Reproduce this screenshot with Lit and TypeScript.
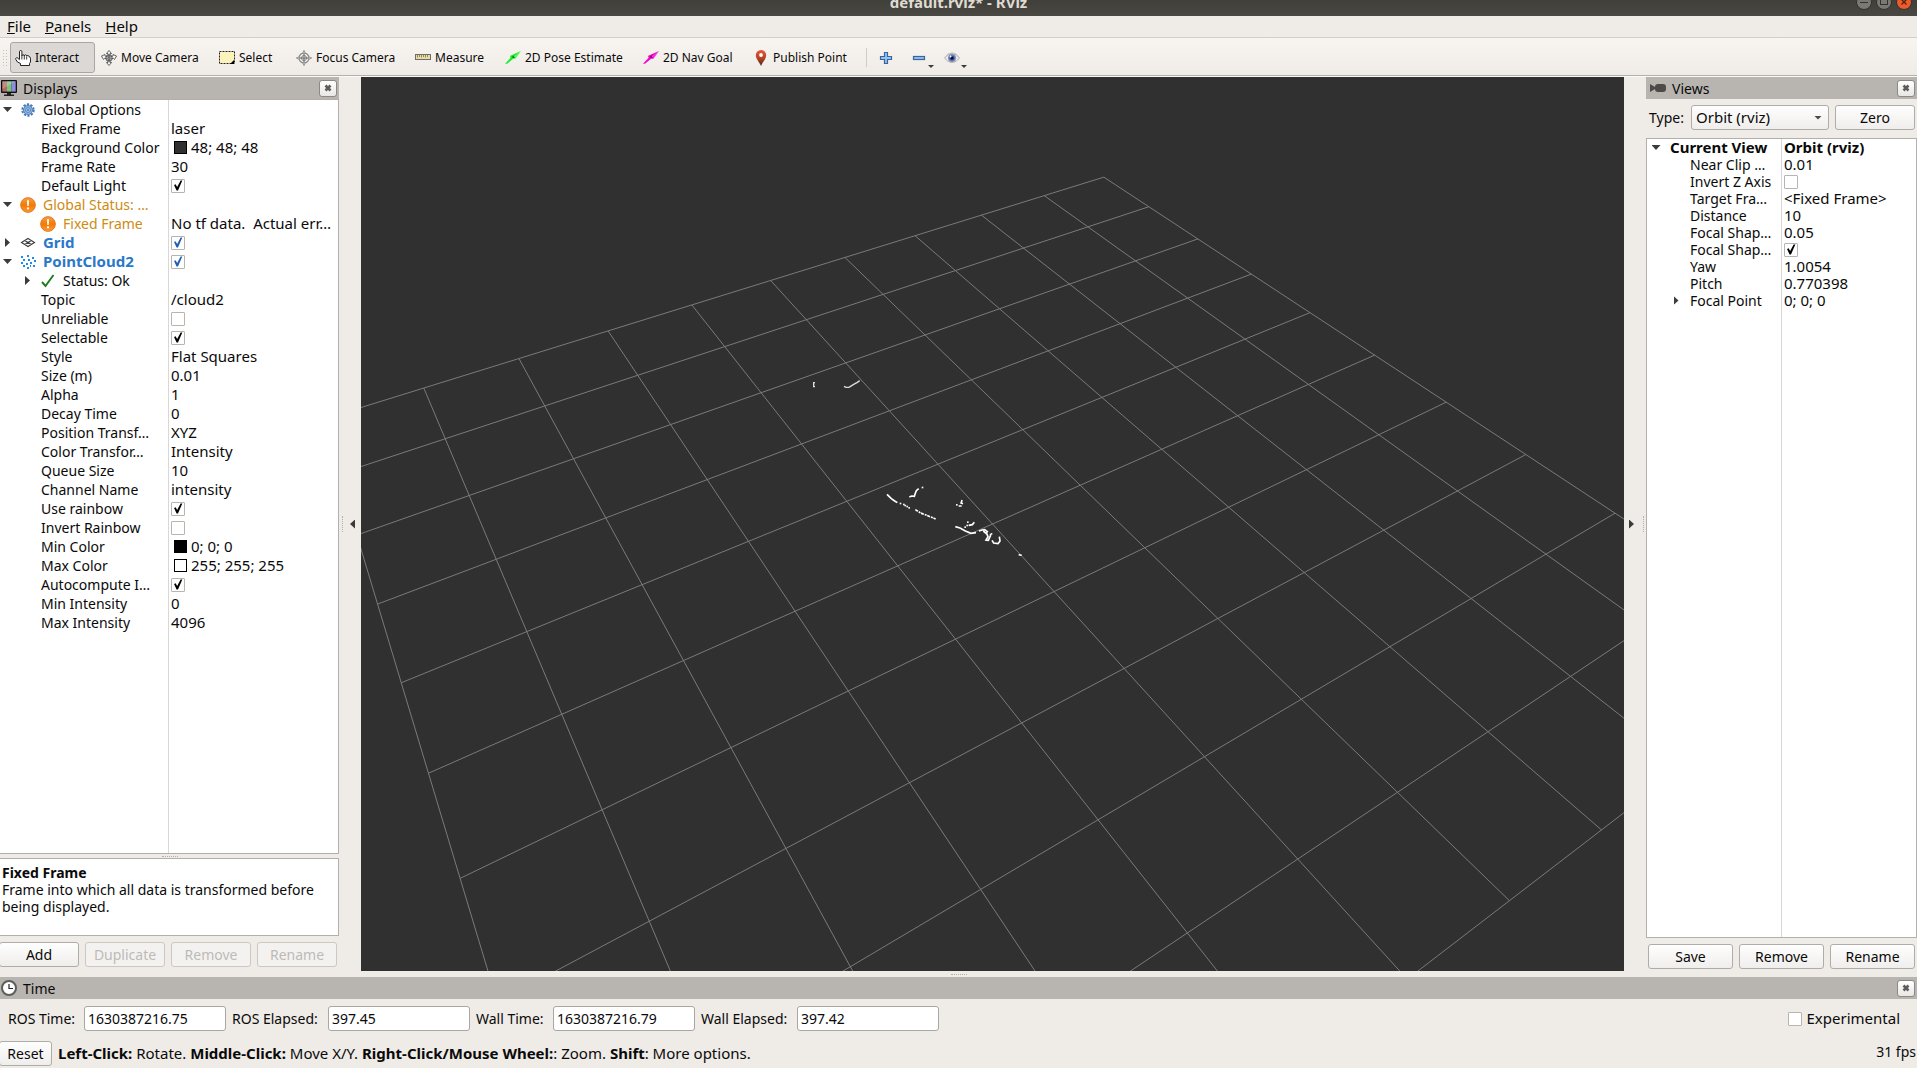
import { LitElement, html, svg, css, nothing, TemplateResult } from "lit";
import { customElement, property } from "lit/decorators.js";
import { classMap } from "lit/directives/class-map.js";
import { styleMap } from "lit/directives/style-map.js";

/* ---------- icons ---------- */

const icon = (body: TemplateResult, w = 16, h = 16) => html`<svg
  width=${w} height=${h} viewBox="0 0 ${w} ${h}" aria-hidden="true" style="display:block;flex:none">${body}</svg>`;

const icons: Record<string, () => TemplateResult> = {
  hand: () => icon(svg`
    <path d="M4.500 9.500V1.700a1.200 1.200 0 0 1 2.400 0V6a1.200 1.200 0 0 1 2.400 0a1.200 1.200 0 0 1 2.400 .2a1.200 1.200 0 0 1 2.300 .5q1.500 0 1.500 1.600V12l-1 1.500v2H5.500v-2L2.500 12L.9 9.600Q.2 8.200 1.300 7.800T3 8.400L4.500 9.700" fill="#fff" stroke="#222" stroke-width="1"/>
    <path d="M6.900 6V9.500M9.300 6V9.500M11.700 6.500V9.500" stroke="#222" stroke-width=".9" fill="none"/>`),
  move: () => icon(svg`
    <g fill="#f6f6f6" stroke="#444" stroke-width=".8">
      <path d="M8 .5L10.500 3.500H9V6H7V3.500H5.500Z"/><path d="M8 15.500L10.500 12.500H9V10H7V12.500H5.500Z"/>
      <path d="M.5 6L4 4.500V6Q8 8.500 12 6V4.500L15.500 6L13.500 9.500L12.500 8.300Q8 10.500 3.500 8.300L2.500 9.500Z"/>
      <circle cx="8" cy="8" r="3.300" fill="none"/>
    </g><path d="M8 5V11M5 8H11" stroke="#555" stroke-width=".8"/>`),
  select: () => icon(svg`
    <rect x=".5" y="1.500" width="15" height="12" fill="#fbf3bb" stroke="#222" stroke-width="1" stroke-dasharray="2 1"/>
    <path d="M15 10V14H11Z" fill="#000"/>`),
  focus: () => icon(svg`
    <g fill="none" stroke="#888" stroke-width="1">
      <circle cx="8" cy="8" r="5" stroke="#8e8e8e" stroke-width="1.300"/><circle cx="8" cy="8" r="2.500"/>
      <path d="M8 4V12M4 8H12" stroke="#666"/>
      <path d="M8 .3L9.300 3.600H6.700ZM8 15.700L9.300 12.400H6.700ZM.3 8L3.600 6.700V9.300ZM15.700 8L12.400 6.700V9.300Z" fill="#ddd" stroke="#888" stroke-width=".8"/>
    </g>`),
  measure: () => icon(svg`
    <rect x=".5" y="4.500" width="15" height="5" fill="#e9dca4" stroke="#6d6d6d"/>
    <path d="M2.500 5V7.500M4.500 5V7M6.500 5V7.500M8.500 5V7M10.500 5V7.500M12.500 5V7" stroke="#8a8153" stroke-width=".9"/>`),
  pose: () => icon(svg`
    <path d="M16 1L4.800 6L7 8.500Z" fill="#1fe81f"/><path d="M16 1L7 8.500L10.200 9Z" fill="#3dff5a"/>
    <path d="M5 8L8.500 5.800L10 8Z" fill="#0f7a1a"/><path d="M0 13.800L6.500 6.800L8.500 8.600L2 13.800Z" fill="#17ee2c"/>`),
  nav: () => icon(svg`
    <path d="M16 1L4.800 6L7 8.500Z" fill="#e800c0"/><path d="M16 1L7 8.500L10.200 9Z" fill="#ff1fe0"/>
    <path d="M5 8L8.500 5.800L10 8Z" fill="#86107a"/><path d="M0 13.800L6.500 6.800L8.500 8.600L2 13.800Z" fill="#f506d4"/>`),
  pin: () => icon(svg`
    <defs><linearGradient id="pin" x1="0" y1="0" x2="0" y2="1"><stop offset="0" stop-color="#e8553a"/><stop offset=".5" stop-color="#b84326"/><stop offset="1" stop-color="#4a2a10"/></linearGradient></defs>
    <path d="M8 0A5.200 5.200 0 0 1 13.200 5.200C13.200 9 9.500 12 8 16C6.500 12 2.800 9 2.800 5.200A5.200 5.200 0 0 1 8 0Z" fill="url(#pin)"/>
    <circle cx="8" cy="5" r="1.900" fill="#fff"/>`),
  plus: () => icon(svg`
    <path d="M6.500 2.500H9.500V6.500H13.500V9.500H9.500V13.500H6.500V9.500H2.500V6.500H6.500Z" fill="#9cc0e8" stroke="#3465a4" stroke-width="1.200"/>`),
  minus: () => icon(svg`
    <rect x="2.500" y="6.500" width="11" height="3" fill="#9cc0e8" stroke="#3465a4" stroke-width="1.200"/>`),
  eye: () => icon(svg`
    <path d="M.5 8Q3.500 3.500 8 3.500T15.500 8Q12.500 12.500 8 12.500T.5 8Z" fill="#e9e9ea" stroke="#a9a9a9" stroke-width=".9"/>
    <circle cx="8" cy="8" r="4" fill="#7c8fc4"/><circle cx="8" cy="8" r="2.600" fill="#46558f"/>
    <circle cx="8" cy="8" r="1.500" fill="#0b0d1a"/><circle cx="6.600" cy="6.500" r=".9" fill="#fff"/>
    <path d="M1 7Q4 2.800 8 2.800T15 7" fill="none" stroke="#c4c4c4" stroke-width="1"/>`),
  monitor: () => icon(svg`
    <rect x="0" y="0" width="16" height="13" rx="1" fill="#111"/>
    <rect x="1.300" y="1.300" width="4.700" height="10.300" fill="#b36a68"/><rect x="6" y="1.300" width="4.500" height="10.300" fill="#78c479"/>
    <rect x="10.500" y="1.300" width="4.200" height="10.300" fill="#8f8fe0"/>
    <path d="M1.300 1.300H14.700L1.300 9Z" fill="#fff" opacity=".22"/>
    <path d="M6 13H10V14.500H13V16H3V14.500H6Z" fill="#222"/>`),
  camera: () => icon(svg`
    <rect x="5" y="4" width="11" height="8" rx="3" fill="#4c4b49"/><path d="M0 4L5 7V9L0 12Z" fill="#4c4b49"/>`),
  clock: () => icon(svg`
    <circle cx="8" cy="8" r="7" fill="#fff" stroke="#5d5d5b" stroke-width="2"/>
    <path d="M8 4V8.500H12" fill="none" stroke="#222" stroke-width="1.200"/>`),
  gear: () => icon(svg`
    <circle cx="8" cy="8" r="5.700" fill="none" stroke="#4478b8" stroke-width="2" stroke-dasharray="2.200 1.381"/>
    <circle cx="8" cy="8" r="4.500" fill="#8fb4e0" stroke="#4478b8" stroke-width=".9"/>
    <circle cx="8" cy="8" r="2.400" fill="#b5cfee" stroke="#4a7cba" stroke-width=".9"/><circle cx="8" cy="8" r=".9" fill="#3a6cab"/>`),
  warn: () => icon(svg`
    <defs><linearGradient id="wg" x1="0" y1="0" x2="0" y2="1"><stop offset="0" stop-color="#f7a04c"/><stop offset=".5" stop-color="#f57900"/><stop offset="1" stop-color="#fb9a3a"/></linearGradient></defs>
    <circle cx="8" cy="8" r="7.400" fill="url(#wg)" stroke="#d9701a" stroke-width=".8"/>
    <path d="M7 3.200H9L8.700 9H7.300Z" fill="#fff"/><rect x="7" y="10.300" width="2" height="2" rx=".6" fill="#fff"/>`),
  grid: () => icon(svg`
    <path d="M8 3.500L14.500 7.500L8 11.500L1.500 7.500ZM4.700 5.500L11.300 9.500M11.300 5.500L4.700 9.500" fill="none" stroke="#3c3c3c" stroke-width="1.100"/>`),
  cloud: () => icon(svg`
    <g fill="#1e8af0"><rect x="1" y="2" width="2" height="2"/><rect x="7" y="1" width="2" height="2"/><rect x="12" y="3" width="2" height="2"/>
    <rect x="3" y="5" width="2" height="2"/><rect x="8" y="5" width="2" height="2"/><rect x="10" y="8" width="2" height="2"/><rect x="14" y="6" width="2" height="2"/>
    <rect x="1" y="8" width="2" height="2"/><rect x="6" y="9" width="2" height="2"/><rect x="3" y="11" width="2" height="2"/><rect x="13" y="11" width="2" height="2"/>
    <rect x="7" y="13" width="2" height="2"/><rect x="10" y="11" width="1" height="2"/></g>`),
  ok: () => icon(svg`
    <path d="M2 9L5.500 13L13.500 2" fill="none" stroke="#1f7a1f" stroke-width="1.900"/>`),
  close: () => icon(svg`
    <path d="M1.500 1.500L6.500 6.500M6.500 1.500L1.500 6.500" stroke="#5e5c5a" stroke-width="2.600"/>`, 8, 8),
};

/* ---------- property tree ---------- */

interface Row {
  level: number;
  name: string;
  icon?: string;
  arrow?: "open" | "shut";
  tone?: "warn" | "display" | "bold";
  value?: string;
  color?: string;
  check?: boolean;
}

const displayRows: Row[] = [
  { level: 0, name: "Global Options", icon: "gear", arrow: "open" },
  { level: 1, name: "Fixed Frame", value: "laser" },
  { level: 1, name: "Background Color", value: "48; 48; 48", color: "rgb(48,48,48)" },
  { level: 1, name: "Frame Rate", value: "30" },
  { level: 1, name: "Default Light", check: true },
  { level: 0, name: "Global Status: …", icon: "warn", arrow: "open", tone: "warn" },
  { level: 1, name: "Fixed Frame", icon: "warn", tone: "warn", value: "No tf data.  Actual err…" },
  { level: 0, name: "Grid", icon: "grid", arrow: "shut", tone: "display", check: true },
  { level: 0, name: "PointCloud2", icon: "cloud", arrow: "open", tone: "display", check: true },
  { level: 1, name: "Status: Ok", icon: "ok", arrow: "shut" },
  { level: 1, name: "Topic", value: "/cloud2" },
  { level: 1, name: "Unreliable", check: false },
  { level: 1, name: "Selectable", check: true },
  { level: 1, name: "Style", value: "Flat Squares" },
  { level: 1, name: "Size (m)", value: "0.01" },
  { level: 1, name: "Alpha", value: "1" },
  { level: 1, name: "Decay Time", value: "0" },
  { level: 1, name: "Position Transf…", value: "XYZ" },
  { level: 1, name: "Color Transfor…", value: "Intensity" },
  { level: 1, name: "Queue Size", value: "10" },
  { level: 1, name: "Channel Name", value: "intensity" },
  { level: 1, name: "Use rainbow", check: true },
  { level: 1, name: "Invert Rainbow", check: false },
  { level: 1, name: "Min Color", value: "0; 0; 0", color: "rgb(0,0,0)" },
  { level: 1, name: "Max Color", value: "255; 255; 255", color: "rgb(255,255,255)" },
  { level: 1, name: "Autocompute I…", check: true },
  { level: 1, name: "Min Intensity", value: "0" },
  { level: 1, name: "Max Intensity", value: "4096" },
];

const viewRows: Row[] = [
  { level: 0, name: "Current View", arrow: "open", tone: "bold", value: "Orbit (rviz)" },
  { level: 1, name: "Near Clip …", value: "0.01" },
  { level: 1, name: "Invert Z Axis", check: false },
  { level: 1, name: "Target Fra…", value: "<Fixed Frame>" },
  { level: 1, name: "Distance", value: "10" },
  { level: 1, name: "Focal Shap…", value: "0.05" },
  { level: 1, name: "Focal Shap…", check: true },
  { level: 1, name: "Yaw", value: "1.0054" },
  { level: 1, name: "Pitch", value: "0.770398" },
  { level: 1, name: "Focal Point", arrow: "shut", value: "0; 0; 0" },
];

const checkStyles = css`
  input[type="checkbox"] {
    appearance: none;
    flex: none;
    width: 14px;
    height: 14px;
    margin: 0;
    border: 1px solid #b8b4af;
    border-radius: 1px;
    background: #fff;
    display: grid;
    box-sizing: border-box;
    color: #000;
  }
  input[type="checkbox"]:checked::before {
    content: "";
    width: 12px;
    height: 12px;
    background: currentColor;
    clip-path: polygon(17% 45%, 30% 40%, 43% 62%, 72% 8%, 86% 8%, 50% 92%, 38% 92%);
  }
`;

@customElement("property-tree")
class PropertyTree extends LitElement {
  @property({ attribute: false }) rows: Row[] = [];

  static styles = [
    checkStyles,
    css`
      :host {
        --row: 19px;
        --split: 168px;
        --text-gap: 1px;
        --arrow: 15px;
        display: block;
        flex: 1;
        min-height: 0;
        overflow: hidden;
        border: 1px solid #b3afab;
        background: linear-gradient(#d8d8d8, #d8d8d8) var(--split) 0 / 1px 100% no-repeat #fff;
      }
      table {
        width: 100%;
        table-layout: fixed;
        border-collapse: collapse;
      }
      .name-col {
        width: calc(var(--split) + 1px);
      }
      td {
        padding: 0;
        height: var(--row);
      }
      .cell {
        display: flex;
        align-items: center;
        height: var(--row);
        line-height: var(--row);
        white-space: nowrap;
      }
      .value {
        padding-left: 2px;
        font-size: 15px;
      }
      .value span {
        white-space: pre;
      }
      .lvl-1 {
        padding-left: 20px;
      }
      .twist {
        flex: none;
        width: var(--arrow);
        margin-right: calc(20px - var(--arrow));
        display: grid;
        place-items: center;
      }
      .twist i {
        background: #3c3b39;
        width: 9px;
        height: 5px;
        clip-path: polygon(0 0, 100% 0, 50% 100%);
      }
      .twist i.shut {
        width: 5px;
        height: 9px;
        clip-path: polygon(0 0, 100% 50%, 0 100%);
      }
      .pic {
        width: 18px;
        margin-right: 4px;
      }
      .text {
        padding-left: var(--text-gap);
      }
      .warn .text {
        color: #ce8b12;
      }
      .display {
        font-weight: bold;
        color: #2a78c8;
      }
      .display input {
        color: #2060b0;
      }
      .bold {
        font-weight: bold;
      }
      .display .text,
      .bold .text {
        font-size: 15px;
      }
      .swatch {
        flex: none;
        width: 11px;
        height: 11px;
        border: 1px solid #000;
        margin: 0 4px 0 3px;
      }
    `,
  ];

  render() {
    return html`<table>
      <colgroup><col class="name-col" /><col /></colgroup>
      <tbody>
        ${this.rows.map((r, i) => {
          const isCheck = r.check !== undefined;
          return html`<tr class=${r.tone ?? nothing}>
            <td>
              <div class=${classMap({ cell: true, "lvl-1": r.level === 1 })}>
                <span class="twist">${r.arrow ? html`<i class=${r.arrow}></i>` : nothing}</span>
                ${r.icon ? html`<span class="pic">${icons[r.icon]()}</span>` : nothing}
                ${isCheck
                  ? html`<label class="text" for="c${i}">${r.name}</label>`
                  : html`<span class="text">${r.name}</span>`}
              </div>
            </td>
            <td>
              <div class="cell value">
                ${r.color ? html`<i class="swatch" style=${styleMap({ background: r.color })}></i>` : nothing}
                ${isCheck ? html`<input type="checkbox" id="c${i}" .checked=${r.check!} />` : nothing}
                ${r.value ? html`<span>${r.value}</span>` : nothing}
              </div>
            </td>
          </tr>`;
        })}
      </tbody>
    </table>`;
  }
}

/* ---------- 3D view ---------- */

const VIEW_W = 1263;
const VIEW_H = 894;
const camera = { distance: 10, yaw: 1.0054, pitch: 0.770398, fov: Math.PI / 4 };

// Projects a point of the ground plane to view coordinates with the origin in the middle.
function project(x: number, y: number): [number, number] {
  const cy = Math.cos(camera.yaw), sy = Math.sin(camera.yaw);
  const cp = Math.cos(camera.pitch), sp = Math.sin(camera.pitch);
  const f = VIEW_H / 2 / Math.tan(camera.fov / 2);
  const along = x * cy + y * sy;
  const depth = camera.distance - cp * along;
  return [(f * (y * cy - x * sy)) / depth, (f * sp * along) / depth];
}

const scan = {
  faint: ["M105 68H101V80H105", "M192 79L198 82H207L215 77L225 71L232 67L239 62"],
  lines: [
    "M321 403L334 416L344 423L352 428",
    "M388 411L395 408L403 409L406 400L409 392L416 386",
    "M536 438L545 438M549 431L541 428M544 428L546 420",
    "M566 496L577 494L583 487",
    "M526 500L540 504L556 513L573 520L588 518",
    "M597 513L606 510L614 509L622 515L618 520L610 513",
    "M620 520L624 530L618 540L625 541L631 528L632 522",
    "M636 541L641 549L654 551L660 543L658 530",
  ],
  dashed: ["M406 449L422 459L440 466L467 477"],
  dots: [[361, 430], [371, 433], [375, 436], [381, 439], [387, 443], [427, 382], [530, 434], [555, 501], [561, 496], [563, 486], [634, 521], [718, 584], [722, 585]],
};

@customElement("scene-view")
class SceneView extends LitElement {
  static styles = css`
    :host {
      display: grid;
      background: #303030;
      min-width: 0;
      min-height: 0;
      overflow: hidden;
    }
    svg {
      width: 100%;
      height: 100%;
      min-height: 0;
      contain: size;
    }
    .grid line {
      stroke: #7a7a7a;
      stroke-width: 1;
    }
    .scan {
      fill: none;
      stroke: #fff;
      stroke-width: 5;
    }
    .faint {
      stroke: #ddd;
      stroke-width: 4;
    }
    .dashed {
      stroke-width: 5;
      stroke-dasharray: 9 3 6 2;
    }
    .dot {
      fill: #f4f4f4;
      stroke: none;
    }
  `;

  render() {
    const line = (a: [number, number], b: [number, number]) =>
      svg`<line x1=${a[0]} y1=${a[1]} x2=${b[0]} y2=${b[1]} />`;
    const steps = Array.from({ length: 11 }, (_, i) => i - 5);
    return html`<svg viewBox="${-VIEW_W / 2} ${-VIEW_H / 2} ${VIEW_W} ${VIEW_H}" preserveAspectRatio="xMidYMid slice" role="img" aria-label="3D view">
      <g class="grid">
        ${steps.map((s) => svg`${line(project(s, -5), project(s, 5))}${line(project(-5, s), project(5, s))}`)}
      </g>
      <g class="scan" transform="translate(-212.5 -164) scale(.33333)">
        ${scan.faint.map((d) => svg`<path class="faint" d=${d} />`)}
        ${scan.lines.map((d) => svg`<path d=${d} />`)}
        ${scan.dashed.map((d) => svg`<path class="dashed" d=${d} />`)}
        ${scan.dots.map(([x, y]) => svg`<rect class="dot" x=${x - 2} y=${y - 2} width="5" height="5" />`)}
      </g>
    </svg>`;
  }
}

/* ---------- application ---------- */

const tools = [
  ["hand", "Interact"],
  ["move", "Move Camera"],
  ["select", "Select"],
  ["focus", "Focus Camera"],
  ["measure", "Measure"],
  ["pose", "2D Pose Estimate"],
  ["nav", "2D Nav Goal"],
  ["pin", "Publish Point"],
];

const times = [
  ["ROS Time:", "1630387216.75"],
  ["ROS Elapsed:", "397.45"],
  ["Wall Time:", "1630387216.79"],
  ["Wall Elapsed:", "397.42"],
];

@customElement("app-root")
class AppRoot extends LitElement {
  static styles = [
    checkStyles,
    css`
      :host {
        display: flex;
        flex-direction: column;
        height: 100vh;
        overflow: hidden;
        background: #efebe7;
        color: #0a0a0a;
        font: 14px/17px "Noto Sans", "Open Sans", sans-serif;
      }
      button,
      input,
      select {
        font: inherit;
        color: inherit;
        box-sizing: border-box;
      }
      button {
        padding: 0;
      }

      .titlebar {
        flex: none;
        display: grid;
        grid-template: 16px / 1fr auto 1fr;
        align-items: end;
        overflow: hidden;
        background: linear-gradient(#403f3a, #4a4842);
        color: #dfdbd2;
        font-size: 15px;
        font-weight: bold;
      }
      .titlebar h1 {
        grid-column: 2;
        margin: 0 0 5px;
        font: inherit;
      }
      .wm {
        display: flex;
        justify-content: end;
        gap: 4px;
        padding: 0 5px 6px 0;
      }
      .wm button {
        width: 16px;
        height: 16px;
        border: 1px solid #33322e;
        border-radius: 8px;
        background: #7b7971;
        color: #33322e;
        display: grid;
        place-items: center;
      }
      .wm .quit {
        background: #ec5b29;
      }

      .menubar {
        flex: none;
        height: 21px;
        display: flex;
        gap: 14px;
        padding-left: 7px;
        border-bottom: 1px solid #d2cec9;
        font-size: 15px;
      }
      .menubar button {
        border: 0;
        background: none;
      }

      .toolbar {
        flex: none;
        height: 35px;
        padding-top: 2px;
        display: grid;
        grid-template-columns: 10px 86px 118px 77px 119px 90px 138px 110px 118px 7px 33px 33px 33px;
        align-items: center;
        background: linear-gradient(#f8f5f1, #efebe7);
        border-bottom: 1px solid #b3afab;
        font-size: 12px;
        box-shadow: 0 1px #fbfaf8;
        margin-bottom: 1px;
      }
      .grip {
        width: 6px;
        height: 18px;
        margin-left: 2px;
        background: radial-gradient(circle, #c4c0bb 1px, transparent 1px) 0 0 / 3px 3px;
      }
      .tool {
        height: 31px;
        display: flex;
        align-items: center;
        gap: 4px;
        padding: 0 0 0 5px;
        border: 1px solid transparent;
        border-width: 1px 0;
        background: none;
        white-space: nowrap;
      }
      .tool.active {
        padding-left: 4px;
        margin-right: 1px;
        border: 1px solid #aaa6a2;
        border-radius: 3px;
        background: #dcd8d5;
      }
      .sep {
        width: 1px;
        height: 19px;
        background: #cfcbc6;
      }
      .tool.drop {
        gap: 1px;
      }
      .drop::after {
        content: "";
        align-self: end;
        margin-bottom: 4px;
        width: 6px;
        height: 3px;
        background: #3c3b39;
        clip-path: polygon(0 0, 100% 0, 50% 100%);
      }

      main {
        flex: 1;
        min-height: 0;
        display: grid;
        grid-template-columns: 339px 22px minmax(0, 1fr) 22px 271px;
      }
      .dock {
        display: flex;
        flex-direction: column;
        min-width: 0;
        min-height: 0;
      }
      .dock-title {
        flex: none;
        height: 22px;
        display: flex;
        align-items: center;
        gap: 6px;
        padding: 0 2px 0 1px;
        background: #b8b4b0;
      }
      .dock-title h2 {
        flex: 1;
        margin: 0;
        font: inherit;
      }
      .views .dock-title {
        padding-left: 4px;
      }
      .close {
        width: 18px;
        height: 17px;
        display: grid;
        place-items: center;
        border: 1px solid #8d8985;
        border-radius: 3px;
        background: linear-gradient(#fff, #e9e7e5);
      }
      .displays property-tree {
        border-left: 0;
      }
      .views property-tree {
        --row: 17px;
        --split: 134px;
        --text-gap: 3px;
        --arrow: 18px;
      }
      .dots {
        border: 0 dotted #b3afab;
      }
      .hsplit {
        flex: none;
        display: grid;
        place-items: center;
      }
      .hsplit .dots {
        width: 16px;
        border-top-width: 1px;
      }
      .displays .hsplit {
        height: 4px;
      }
      .help {
        flex: none;
        height: 76px;
        border: 1px solid #b3afab;
        border-left: 0;
        background: #fff;
        padding: 0 2px;
      }
      .help p {
        margin: 0;
      }
      .help p:first-child {
        padding-top: 5px;
      }
      .buttons {
        flex: none;
        display: grid;
        grid-auto-flow: column;
        grid-auto-columns: 1fr;
        gap: 6px;
        padding: 6px 2px 4px 0;
      }
      .displays .buttons {
        margin-left: -1px;
      }
      .views .buttons {
        padding: 6px 2px 2px;
      }
      .btn {
        height: 25px;
        border: 1px solid #b0aca8;
        border-radius: 3px;
        background: linear-gradient(#fefefe, #f0eeec);
      }
      .btn:disabled {
        color: #bdbab7;
        border-color: #cbc8c4;
        background: #f4f2f0;
      }
      .vsplit {
        display: flex;
        align-items: center;
        justify-content: space-between;
        padding: 0 6px 0 3px;
      }
      .vsplit.right {
        flex-direction: row-reverse;
        padding: 0 2px 0 5px;
      }
      .vsplit .dots {
        height: 16px;
        border-left-width: 1px;
      }
      .vsplit button {
        width: 5px;
        height: 9px;
        border: 0;
        background: #3c3b39;
        clip-path: polygon(100% 0, 0 50%, 100% 100%);
      }
      .vsplit.right button {
        clip-path: polygon(0 0, 100% 50%, 0 100%);
      }
      .type-row {
        display: grid;
        grid-template-columns: 36px minmax(0, 1fr) 80px;
        align-items: center;
        gap: 6px;
        padding: 6px 2px 8px 3px;
      }
      .combo {
        display: grid;
        align-items: center;
      }
      .combo select,
      .combo::after {
        grid-area: 1 / 1;
      }
      .combo::after {
        content: "";
        justify-self: end;
        margin-right: 7px;
        width: 8px;
        height: 4px;
        background: #4c4b49;
        clip-path: polygon(0 0, 100% 0, 50% 100%);
        pointer-events: none;
      }
      select {
        appearance: none;
        padding: 0 4px;
        width: 100%;
        font-size: 15px;
      }

      .time .hsplit {
        height: 6px;
      }
      .fields {
        height: 35px;
        display: grid;
        grid-template-columns: 70px 142px 90px 142px 71px 142px 90px 142px 1fr auto;
        align-items: center;
        gap: 6px;
        padding: 2px 17px 0 8px;
        white-space: nowrap;
      }
      .field {
        height: 25px;
        width: 100%;
        border: 1px solid #aaa6a2;
        border-radius: 3px;
        background: #fff;
        padding: 0 3px;
      }
      .experimental {
        grid-column: 10;
        display: flex;
        align-items: center;
        gap: 5px;
        font-size: 15px;
      }
      .statusbar {
        flex: none;
        height: 32px;
        display: flex;
        align-items: center;
        gap: 6px;
        padding: 3px 1px 0 0;
        box-sizing: border-box;
      }
      .statusbar .btn {
        width: 53px;
        margin-left: -1px;
      }
      .status-text {
        flex: 1;
        font-size: 15px;
      }
      .fps {
        padding-bottom: 4px;
      }
    `,
  ];

  private dockTitle(pic: string, title: string) {
    return html`<header class="dock-title">
      ${icons[pic]()}
      <h2>${title}</h2>
      <button class="close" aria-label="Close ${title}">${icons.close()}</button>
    </header>`;
  }

  render() {
    return html`
      <header class="titlebar">
        <h1>default.rviz* - RViz</h1>
        <div class="wm">
          <button aria-label="Minimize">${icon(svg`<path d="M0 4.500H8" stroke="#33322e"/>`, 8, 8)}</button>
          <button aria-label="Maximize">${icon(svg`<rect x=".5" y="1.500" width="7" height="5" fill="none" stroke="#33322e"/>`, 8, 8)}</button>
          <button class="quit" aria-label="Close window">${icon(svg`<path d="M1.500 1.500L6.500 6.500M6.500 1.500L1.500 6.500" stroke="#4a2010" stroke-width="1.200"/>`, 8, 8)}</button>
        </div>
      </header>
      <nav class="menubar">
        ${["File", "Panels", "Help"].map((m) => html`<button><u>${m[0]}</u>${m.slice(1)}</button>`)}
      </nav>
      <div class="toolbar" role="toolbar">
        <span class="grip"></span>
        ${tools.map(([pic, name], i) => html`<button class=${classMap({ tool: true, active: i === 0 })}>${icons[pic]()}${name}</button>`)}
        <span class="sep"></span>
        <button class="tool" aria-label="Add tool">${icons.plus()}</button>
        <button class="tool drop" aria-label="Remove tool">${icons.minus()}</button>
        <button class="tool drop" aria-label="Visibility">${icons.eye()}</button>
      </div>
      <main>
        <section class="dock displays">
          ${this.dockTitle("monitor", "Displays")}
          <property-tree .rows=${displayRows}></property-tree>
          <div class="hsplit"><span class="dots"></span></div>
          <div class="help">
            <p><b>Fixed Frame</b></p>
            <p>Frame into which all data is transformed before being displayed.</p>
          </div>
          <div class="buttons">
            <button class="btn">Add</button>
            <button class="btn" disabled>Duplicate</button>
            <button class="btn" disabled>Remove</button>
            <button class="btn" disabled>Rename</button>
          </div>
        </section>
        <div class="vsplit"><span class="dots"></span><button aria-label="Hide left panel"></button></div>
        <scene-view></scene-view>
        <div class="vsplit right"><span class="dots"></span><button aria-label="Hide right panel"></button></div>
        <section class="dock views">
          ${this.dockTitle("camera", "Views")}
          <div class="type-row">
            <label for="type">Type:</label>
            <span class="combo"><select id="type" class="btn"><option>Orbit (rviz)</option></select></span>
            <button class="btn">Zero</button>
          </div>
          <property-tree .rows=${viewRows}></property-tree>
          <div class="buttons">
            <button class="btn">Save</button>
            <button class="btn">Remove</button>
            <button class="btn">Rename</button>
          </div>
        </section>
      </main>
      <section class="time">
        <div class="hsplit"><span class="dots"></span></div>
        ${this.dockTitle("clock", "Time")}
        <div class="fields">
          ${times.map(([name, value], i) => html`<label for="t${i}">${name}</label><input class="field" id="t${i}" type="text" readonly .value=${value} />`)}
          <div class="experimental"><input type="checkbox" id="exp" /><label for="exp">Experimental</label></div>
        </div>
      </section>
      <footer class="statusbar">
        <button class="btn">Reset</button>
        <span class="status-text"><b>Left-Click:</b> Rotate. <b>Middle-Click:</b> Move X/Y. <b>Right-Click/Mouse Wheel:</b>: Zoom. <b>Shift</b>: More options.</span>
        <span class="fps">31 fps</span>
      </footer>
    `;
  }
}
